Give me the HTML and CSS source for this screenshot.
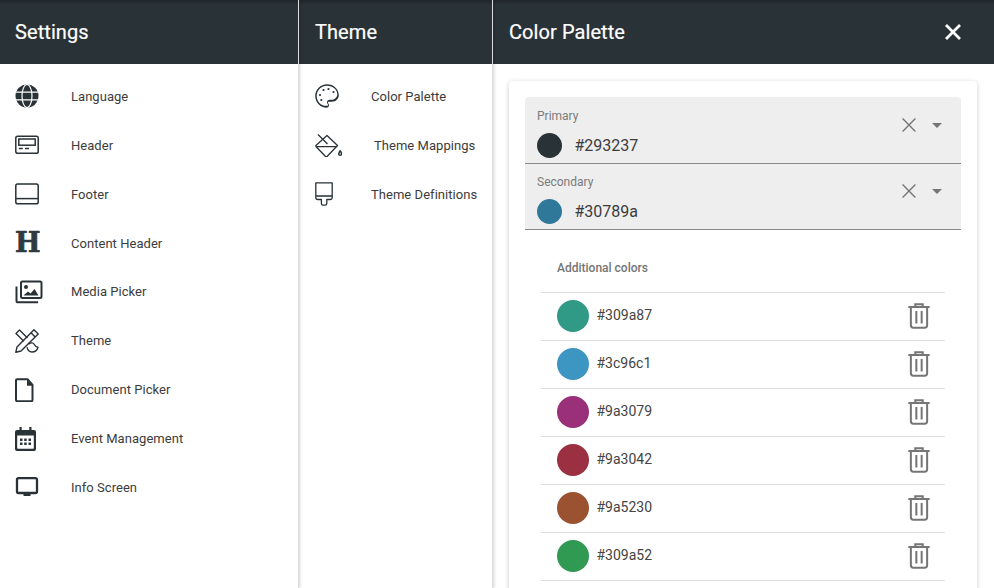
FILE: index.html
```html
<!DOCTYPE html>
<html lang="en">
<head>
  <meta charset="UTF-8">
  <meta name="viewport" content="width=device-width, initial-scale=1.0">
  <title>Settings</title>
  <link rel="stylesheet" href="styles.css">
</head>
<body>
  <svg class="defs" width="0" height="0">
    <symbol id="trash" viewBox="0 0 24 24"><path fill="none" stroke="currentColor" stroke-width="1.5" d="M4 5.2h16M9.200 5V3.200h5.600V5M5.900 5.200V19a1.800 1.800 0 0 0 1.800 1.800h8.600a1.800 1.800 0 0 0 1.800-1.800V5.200M10 8.200v9.400M14 8.200v9.400"/></symbol>
    <symbol id="clear" viewBox="0 0 24 24"><path fill="none" stroke="currentColor" stroke-width="1.500" d="M5 5l14 14M19 5L5 19"/></symbol>
  </svg>

  <div class="app">
    <section class="panel panel-settings">
      <header class="bar"><h2>Settings</h2></header>
      <ul class="menu">
        <li>
          <svg class="icon" viewBox="0 0 24 24"><circle cx="12" cy="12" r="11.500" fill="#293237"/><g fill="none" stroke="#fff" stroke-width="1.200"><ellipse cx="12" cy="12" rx="5" ry="11.500"/><path d="M1 8.200h22M1 15.800h22"/></g></svg>
          <span>Language</span>
        </li>
        <li>
          <svg class="icon" viewBox="0 0 24 24"><g fill="none" stroke="#293237" stroke-width="1.500"><rect x=".8" y="3.200" width="22.400" height="17" rx="1.800"/><rect x="3.800" y="6" width="16.400" height="6.200"/><path d="M3.800 15.600h4M10 15.600h4"/></g></svg>
          <span>Header</span>
        </li>
        <li>
          <svg class="icon" viewBox="0 0 24 24"><g fill="none" stroke="#293237" stroke-width="1.500"><rect x=".8" y="2" width="22.400" height="19.800" rx="1.800"/><path d="M.8 16.600h22.400"/></g></svg>
          <span>Footer</span>
        </li>
        <li>
          <span class="icon icon-h">H</span>
          <span>Content Header</span>
        </li>
        <li>
          <svg class="icon icon-wide" viewBox="0 0 28 24"><path fill="none" stroke="#293237" stroke-width="2" d="M1.500 6.500v14.200a1.600 1.600 0 0 0 1.600 1.600h20"/><rect x="6" y="1.500" width="20.500" height="16.500" rx="1.500" fill="none" stroke="#293237" stroke-width="2"/><circle cx="11" cy="7" r="2" fill="#293237"/><path fill="#293237" d="M8.500 15.500l4.500-4 2.500 2 4-4.500 4 6.500z"/></svg>
          <span>Media Picker</span>
        </li>
        <li>
          <svg class="icon" viewBox="0 0 24 24"><g fill="none" stroke="#293237" stroke-width="1.400" stroke-linejoin="round"><path d="M8.800 12.300L1 4.500 4.500 1l8 8"/><path d="M19 .8l4.200 4.200L6 22l-5.200 1.300L2 18z"/><path d="M16 3.800l4.200 4.200"/><path d="M14 15c2-1.800 4.500-1.300 5.300.5.700 1.500 1.300 2.500 3.700 2.700-.8 2.800-3 4.800-6 4.800-2.900 0-4.800-2.400-4.800-4.800"/></g></svg>
          <span>Theme</span>
        </li>
        <li>
          <svg class="icon" viewBox="0 0 24 24"><path fill="none" stroke="#293237" stroke-width="2" stroke-linejoin="round" d="M2 1.200h10.500l5 5.800v15a1.200 1.200 0 0 1-1.200 1.200H2A1.200 1.200 0 0 1 1 22V2.200a1 1 0 0 1 1-1z"/><path fill="#293237" d="M12 1.500l5.500 6.300H12z"/></svg>
          <span>Document Picker</span>
        </li>
        <li>
          <svg class="icon" viewBox="0 0 24 24"><path fill="#293237" fill-rule="evenodd" d="M2 3h2.500V0h2.200v3h7.600V0h2.200v3H19a2 2 0 0 1 2 2v17a2 2 0 0 1-2 2H2a2 2 0 0 1-2-2V5a2 2 0 0 1 2-2zM2.200 8.500V21a.8.8 0 0 0 .8.800h15a.8.8 0 0 0 .8-.8V8.500z"/><path fill="#293237" d="M5 11.500h2.500V14H5zM9.200 11.500h2.500V14H9.200zM13.500 11.500H16V14h-2.500zM5 15.500h2.500V18H5zM9.200 15.500h2.500V18H9.200zM13.500 15.500H16V18h-2.500z"/></svg>
          <span>Event Management</span>
        </li>
        <li>
          <svg class="icon" viewBox="0 0 24 24"><path fill="none" stroke="#293237" stroke-width="2.300" d="M3.500 3.200h17a1.500 1.500 0 0 1 1.500 1.500V16.500a1.500 1.500 0 0 1-1.500 1.500h-17A1.500 1.500 0 0 1 2 16.500V4.700a1.500 1.500 0 0 1 1.500-1.500z"/><path fill="#293237" d="M8.500 18.500h7V21h-7z"/></svg>
          <span>Info Screen</span>
        </li>
      </ul>
    </section>

    <section class="panel panel-theme">
      <header class="bar"><h2>Theme</h2></header>
      <ul class="menu">
        <li>
          <svg class="icon" viewBox="0 0 24 24"><path fill="#293237" fill-rule="evenodd" d="M12 .2C5.500.2.200 5.500.2 12S5.500 23.800 11.500 23.800c1.400 0 2.500-1.100 2.500-2.500 0-.6-.2-1.200-.7-1.800-.2-.2-.3-.4-.3-.7 0-.6.4-1 1-1H17c3.600 0 6.800-2.900 6.800-6.500C23.800 4.900 18.500.2 12 .2zM12 1.800c5.700 0 10.300 4 10.300 8.500 0 2.800-2.500 5.500-5.300 5.500h-2.500c-1.400 0-2.500 1.100-2.500 2.500 0 .6.200 1.200.7 1.800.2.200.3.400.3.700 0 .6-.4 1-1 1C6.300 22.300 1.700 17.700 1.700 12S6.300 1.800 12 1.800z"/><g fill="#293237"><circle cx="5" cy="11" r="1.100"/><circle cx="8.500" cy="6" r="1.100"/><circle cx="13.500" cy="5" r="1.100"/><circle cx="18.500" cy="8" r="1.100"/><circle cx="6.300" cy="16" r="1.100"/></g></svg>
          <span>Color Palette</span>
        </li>
        <li>
          <svg class="icon icon-bucket" viewBox="0 0 27 24"><g fill="none" stroke="#293237" stroke-width="1.300" stroke-linejoin="round"><path d="M12 2.500l10.500 10-10.200 10.800a1.500 1.500 0 0 1-2 0L1.200 13.800a1 1 0 0 1 0-1.500z"/><path d="M1 13.600h20.500M3 1.500l9.500 9.500"/><path d="M25.200 17.800c.9 1.300 1.300 2.200 1.300 3.100a1.400 1.400 0 0 1-2.800 0c0-.9.600-1.800 1.500-3.100z" stroke-width="1.500"/></g></svg>
          <span class="shifted">Theme Mappings</span>
        </li>
        <li>
          <svg class="icon" viewBox="0 0 24 24"><path fill="none" stroke="#293237" stroke-width="1.300" stroke-linejoin="round" d="M.8.800h16.400v14.900c0 1-.8 1.800-1.800 1.800h-3.600v4.100c0 1-.8 1.600-1.700 1.600H8.100c-.9 0-1.700-.6-1.700-1.600v-4.100H2.600c-1 0-1.800-.8-1.800-1.800zM.8 14h16.400"/></svg>
          <span>Theme Definitions</span>
        </li>
      </ul>
    </section>

    <section class="panel panel-palette">
      <header class="bar">
        <h2>Color Palette</h2>
        <svg class="close" viewBox="0 0 18 18"><path fill="none" stroke="#fff" stroke-width="2.800" d="M2 2l14 14M16 2L2 16"/></svg>
      </header>
      <div class="content">
        <div class="card">
          <div class="field">
            <div class="field-main">
              <label>Primary</label>
              <div class="field-value"><i class="dot dot-small swatch-primary"></i>#293237</div>
            </div>
            <svg class="clear"><use href="#clear"/></svg>
            <i class="arrow"></i>
          </div>
          <div class="field">
            <div class="field-main">
              <label>Secondary</label>
              <div class="field-value"><i class="dot dot-small swatch-secondary"></i>#30789a</div>
            </div>
            <svg class="clear"><use href="#clear"/></svg>
            <i class="arrow"></i>
          </div>

          <h3>Additional colors</h3>
          <ul class="colors">
            <li><i class="dot swatch-1"></i><span>#309a87</span><svg class="trash"><use href="#trash"/></svg></li>
            <li><i class="dot swatch-2"></i><span>#3c96c1</span><svg class="trash"><use href="#trash"/></svg></li>
            <li><i class="dot swatch-3"></i><span>#9a3079</span><svg class="trash"><use href="#trash"/></svg></li>
            <li><i class="dot swatch-4"></i><span>#9a3042</span><svg class="trash"><use href="#trash"/></svg></li>
            <li><i class="dot swatch-5"></i><span>#9a5230</span><svg class="trash"><use href="#trash"/></svg></li>
            <li><i class="dot swatch-6"></i><span>#309a52</span><svg class="trash"><use href="#trash"/></svg></li>
          </ul>
        </div>
      </div>
    </section>
  </div>
</body>
</html>
```

FILE: styles.css
```css
html, body {
  height: 100%;
}
body {
  font-family: Roboto, Arial, sans-serif;
  background-color: #fff;
  color: #3c3c3c;
  margin: 0;
  padding: 0;
  overflow: hidden;
}
ul {
  list-style: none;
  margin: 0;
  padding: 0;
}
.defs {
  position: absolute;
}
.app {
  display: flex;
  height: 588px;
}
.panel {
  flex: none;
  box-sizing: border-box;
  background-color: #fff;
  border-right: 1px solid #ddd;
  box-shadow: 1px 0 3px rgba(0, 0, 0, 0.18);
  position: relative;
}
.panel-settings {
  width: 299px;
  z-index: 2;
}
.panel-theme {
  width: 194px;
  z-index: 1;
}
.panel-palette {
  width: 501px;
  border-right: none;
  box-shadow: none;
  overflow: hidden;
}
.bar {
  height: 64px;
  display: flex;
  align-items: center;
  justify-content: space-between;
  padding: 0 15px;
  background: linear-gradient(#1f272b, #293237 5px);
  color: #fff;
}
.panel-theme .bar {
  padding-left: 16px;
}
.panel-palette .bar {
  padding: 0 32px 0 16px;
}
.bar h2 {
  margin: 0;
  font-size: 20px;
  font-weight: 400;
  letter-spacing: 0.08px;
  -webkit-text-stroke: 0.2px #fff;
}
.close {
  width: 18px;
  height: 18px;
}
.menu {
  padding-top: 8px;
}
.menu li {
  height: 48.875px;
  display: flex;
  align-items: center;
  padding-left: 15px;
  font-size: 13px;
  font-weight: 400;
  letter-spacing: 0.04px;
}
.panel-theme .menu li {
  padding-left: 16px;
}
.icon {
  flex: none;
  width: 24px;
  height: 24px;
  margin-right: 32px;
}
.icon-wide {
  width: 28px;
  margin-right: 28px;
}
.panel-theme .menu li .icon-bucket {
  width: 27px;
  margin-right: 32px;
}
.icon-h {
  font-family: "DejaVu Serif", serif;
  font-weight: 700;
  font-size: 27px;
  line-height: 24px;
  color: #2f3a40;
  text-align: center;
  -webkit-text-stroke: 0.7px #2f3a40;
}
.content {
  padding: 17px 17px 0 16px;
}
.card {
  padding: 16px;
  background-color: #fff;
  border-radius: 4px;
  box-shadow: 0 1px 5px rgba(0, 0, 0, 0.2);
  min-height: 600px;
}
.field {
  display: flex;
  align-items: flex-start;
  height: 66px;
  padding: 0 19px 0 12px;
  background-color: #eee;
  border-bottom: 1px solid #8a8a8a;
}
.field:first-of-type {
  position: relative;
  border-radius: 4px 4px 0 0;
}
.field + .field {
  margin-top: -1px;
}
.field-main {
  flex: 1;
}
.field label {
  display: block;
  padding-top: 12px;
  font-size: 12px;
  line-height: 14px;
  color: #7b7b7b;
}
.field-value {
  display: flex;
  align-items: center;
  margin-top: 10px;
  font-size: 16px;
  color: #3c3c3c;
}
.clear {
  width: 22px;
  height: 22px;
  margin: 17px 12px 0 0;
  color: #757575;
}
.arrow {
  width: 0;
  height: 0;
  margin-top: 26px;
  border-left: 5px solid transparent;
  border-right: 5px solid transparent;
  border-top: 5px solid #757575;
}
.dot {
  flex: none;
  display: block;
  width: 32px;
  height: 32px;
  border-radius: 50%;
}
.dot-small {
  width: 25px;
  height: 25px;
  margin-right: 12.5px;
}
.swatch-primary { background-color: #293237; }
.swatch-secondary { background-color: #30789a; }
.swatch-1 { background-color: #309a87; }
.swatch-2 { background-color: #3c96c1; }
.swatch-3 { background-color: #9a3079; }
.swatch-4 { background-color: #9a3042; }
.swatch-5 { background-color: #9a5230; }
.swatch-6 { background-color: #309a52; }
.card h3 {
  margin: 31px 0 17px 32px;
  font-size: 12px;
  line-height: 14px;
  font-weight: 500;
  color: #757575;
}
.colors {
  margin: 0 16px;
  border-bottom: 1px solid #e0e0e0;
}
.colors li {
  box-sizing: border-box;
  height: 48px;
  display: flex;
  align-items: center;
  padding: 0 10px 2px 16px;
  border-top: 1px solid #e0e0e0;
  font-size: 14px;
  color: #444;
}
.colors span {
  flex: 1;
  margin-left: 7.5px;
  padding-bottom: 2px;
}
.trash {
  width: 32px;
  height: 32px;
  color: #757575;
}
```
